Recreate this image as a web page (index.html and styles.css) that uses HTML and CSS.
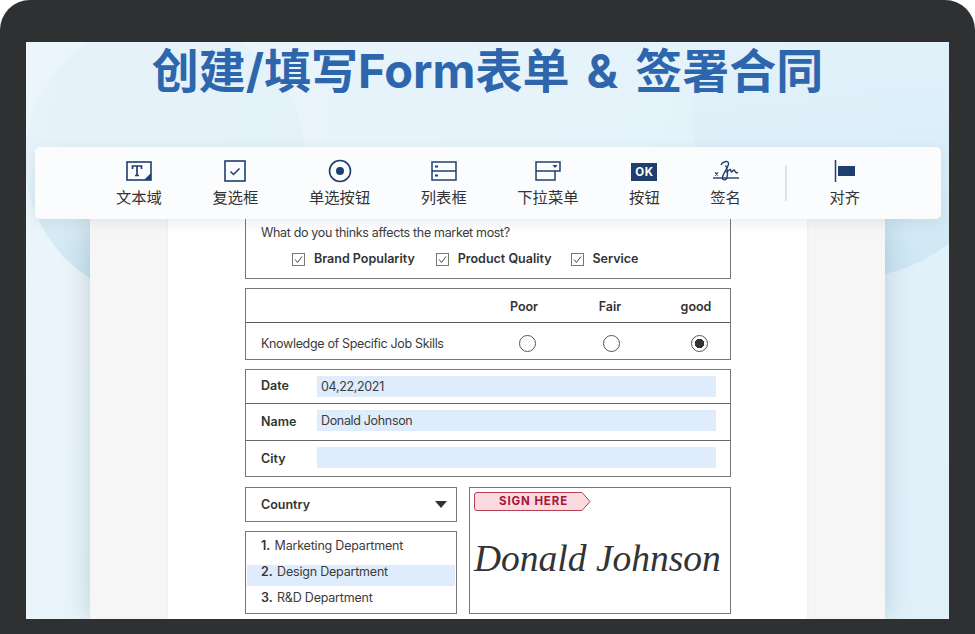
FILE: index.html
```html
<!DOCTYPE html>
<html lang="zh">
<head>
<meta charset="utf-8">
<title>创建/填写Form表单 & 签署合同</title>
<link rel="stylesheet" href="styles.css">
</head>
<body>
<div class="device">
  <main class="screen">
    <div class="blob blob-left"></div>
    <div class="blob blob-right"></div>
    <h1 class="title">创建/填写Form表单 &amp; 签署合同</h1>
    <nav class="toolbar">
      <div class="tool">
        <svg class="ico" width="26" height="22" viewBox="0 0 26 22"><rect x="1" y="2" width="24" height="18" fill="none" stroke="#1f3f6e" stroke-width="1.6"/><path d="M25 13v7h-7z" fill="#1f3f6e"/><path d="M6.500 9V6h9v3M11 6v9.500M9 15.500h4" fill="none" stroke="#1f3f6e" stroke-width="1.7"/></svg>
        <span>文本域</span>
      </div>
      <div class="tool">
        <svg class="ico" width="22" height="22" viewBox="0 0 22 22"><rect x="1" y="1" width="20" height="20" fill="none" stroke="#1f3f6e" stroke-width="1.6"/><path d="M6.500 11.500l3 3 6-6" fill="none" stroke="#1f3f6e" stroke-width="1.500"/></svg>
        <span>复选框</span>
      </div>
      <div class="tool">
        <svg class="ico" width="24" height="24" viewBox="0 0 24 24"><circle cx="12" cy="12" r="10.500" fill="none" stroke="#1f3f6e" stroke-width="1.6"/><circle cx="12" cy="12" r="4" fill="#1f3f6e"/></svg>
        <span>单选按钮</span>
      </div>
      <div class="tool">
        <svg class="ico" width="26" height="22" viewBox="0 0 26 22"><rect x="1" y="2" width="24" height="18" fill="none" stroke="#1f3f6e" stroke-width="1.500"/><path d="M1 11h24" stroke="#1f3f6e" stroke-width="1.500"/><path d="M4 5.500h3v2H4zM4 14.500h3v2H4z" fill="#1f3f6e"/></svg>
        <span>列表框</span>
      </div>
      <div class="tool">
        <svg class="ico" width="26" height="22" viewBox="0 0 26 22"><path d="M1 2h24v9h-5v9H1zM1 11h19" fill="none" stroke="#1f3f6e" stroke-width="1.500"/><path d="M17.500 5h5l-2.500 3z" fill="#1f3f6e"/></svg>
        <span>下拉菜单</span>
      </div>
      <div class="tool">
        <div class="ok">OK</div>
        <span>按钮</span>
      </div>
      <div class="tool">
        <svg class="ico" width="26" height="22" viewBox="0 0 26 22"><path d="M0 18h26" stroke="#1f3f6e" stroke-width="1.400"/><path d="M2 12.500l3 3M5 12.500l-3 3" stroke="#1f3f6e" stroke-width="1.100"/><path d="M8 5C9 2 15 0 15.500 3 16 7 10.500 12 9.500 17c-.6 3.500 3.500 4 4.500.5 1-4 .5-10-1.500-12M13 12c2-.5 3.500-3 4.500-2.500.8.500 0 2.500 1 2.500s1.500-2 2.500-2 1 2 2 2.500 1.500 0 2 0" fill="none" stroke="#1f3f6e" stroke-width="1.400"/></svg>
        <span>签名</span>
      </div>
      <div class="divider"></div>
      <div class="tool">
        <svg class="ico" width="22" height="22" viewBox="0 0 22 22"><path d="M1.500 0v22" stroke="#1f3f6e" stroke-width="1.500"/><rect x="4" y="6" width="17" height="10" fill="#1f3f6e"/></svg>
        <span>对齐</span>
      </div>
    </nav>

    <section class="page">
      <div class="sheet">
        <div class="box question">
          <p class="ask">What do you thinks affects the market most?</p>
          <div class="checks">
            <label class="check"><svg width="13" height="13" viewBox="0 0 13 13"><rect x=".5" y=".5" width="12" height="12" fill="#fff" stroke="#777"/><path d="M3 6.500l2.500 3 4.500-6" fill="none" stroke="#444"/></svg>Brand Popularity</label>
            <label class="check"><svg width="13" height="13" viewBox="0 0 13 13"><rect x=".5" y=".5" width="12" height="12" fill="#fff" stroke="#777"/><path d="M3 6.500l2.500 3 4.500-6" fill="none" stroke="#444"/></svg>Product Quality</label>
            <label class="check"><svg width="13" height="13" viewBox="0 0 13 13"><rect x=".5" y=".5" width="12" height="12" fill="#fff" stroke="#777"/><path d="M3 6.500l2.500 3 4.500-6" fill="none" stroke="#444"/></svg>Service</label>
          </div>
        </div>

        <div class="box rating">
          <div class="rate-head"><span></span><b>Poor</b><b>Fair</b><b>good</b></div>
          <div class="rate-row">
            <span>Knowledge of Specific Job Skills</span>
            <i class="radio"></i><i class="radio"></i><i class="radio on"></i>
          </div>
        </div>

        <div class="box fields">
          <div class="field"><b>Date</b><div class="input">04,22,2021</div></div>
          <div class="field"><b>Name</b><div class="input">Donald Johnson</div></div>
          <div class="field"><b>City</b><div class="input"></div></div>
        </div>

        <div class="bottom">
          <div class="col">
            <div class="box select"><b>Country</b><i class="caret"></i></div>
            <div class="box list">
              <div class="opt"><b>1.</b> Marketing Department</div>
              <div class="opt sel"><b>2.</b> Design Department</div>
              <div class="opt"><b>3.</b> R&amp;D Department</div>
            </div>
          </div>
          <div class="box sign">
            <div class="badge">
              <svg class="badge-bg" width="117" height="19" viewBox="0 0 117 19"><path d="M3 .5h105l8 9-8 9H3a2.500 2.500 0 0 1-2.500-2.500V3A2.500 2.500 0 0 1 3 .5z" fill="#fbdbe0" stroke="#b5404f"/></svg>
              <span>SIGN HERE</span>
            </div>
            <div class="signature">Donald Johnson</div>
          </div>
        </div>
      </div>
    </section>
  </main>
</div>
</body>
</html>
```
FILE: styles.css
```css
* { box-sizing: border-box; }
html, body { margin: 0; height: 100%; background: #fff; overflow: hidden; }
body { font-family: Inter, "Noto Sans CJK SC", sans-serif; color: #333; }

.device {
  width: 975px;
  height: 634px;
  background: #2f3032;
  border-radius: 30px 30px 0 0;
  padding: 42px 26px 15px;
}
.screen {
  position: relative;
  isolation: isolate;
  height: 577px;
  display: flex;
  flex-direction: column;
  overflow: hidden;
  background: linear-gradient(100deg, #ebf5fb 0%, #e6f3fa 50%, #e0f1fa 100%);
}
.blob {
  position: absolute;
  z-index: -1;
  border-radius: 50%;
}
.blob-left {
  left: -1px;
  top: -22px;
  width: 280px;
  height: 280px;
  background: linear-gradient(180deg, rgba(190,220,235,.10) 0%, rgba(190,220,235,.10) 52%, rgba(165,212,232,.5) 100%);
}
.blob-right {
  left: 666px;
  top: -80px;
  width: 316px;
  height: 316px;
  background: linear-gradient(180deg, rgba(190,222,238,0) 25%, rgba(190,222,238,.2) 65%, rgba(180,218,236,.45) 100%);
}
.title {
  flex: none;
  margin: 0;
  height: 105px;
  font: 700 47px/58px Inter, "Noto Sans CJK SC", sans-serif;
  word-spacing: 6px;
  color: #2e66ae;
  text-align: center;
  white-space: pre;
}
.toolbar {
  position: relative;
  z-index: 2;
  flex: none;
  margin: 0 8px 0 9px;
  height: 72px;
  padding: 0 0 0 81px;
  display: flex;
  align-items: flex-start;
  gap: 50.6px;
  background: #fbfcfe;
  border-radius: 5px;
  box-shadow: 0 4px 14px rgba(60,80,100,.10);
}
.tool {
  height: 72px;
  padding-top: 12px;
  display: flex;
  flex-direction: column;
  align-items: center;
  font-size: 15.3px;
  line-height: 20px;
  color: #333;
}
.ico { flex: none; height: 24px; margin-bottom: 5px; }
.ok {
  flex: none;
  width: 26px;
  height: 18px;
  margin: 4px 0 7px;
  background: #1f3f6e;
  color: #fff;
  font: 700 11.500px/18px Inter, sans-serif;
  text-align: center;
  letter-spacing: .5px;
}
.divider {
  flex: none;
  width: 2px;
  height: 36px;
  margin: 18px -8px 0 -6.6px;
  background: #e0e3e6;
}

.page {
  flex: 1;
  min-height: 0;
  margin: 0 64px;
  padding: 0 78px;
  background: #f6f6f6;
  box-shadow: 0 0 26px rgba(60,90,115,.25);
}
.sheet {
  height: 100%;
  padding: 0 76px 0 77px;
  background: #fff;
  box-shadow: 0 0 3px rgba(0,0,0,.07);
  font-size: 12.5px;
  letter-spacing: -.33px;
  color: #3c3c3c;
}
.sheet b, .check { letter-spacing: 0; color: #333; }
.box { border: 1px solid #777; }
.question {
  border-top: 0;
  height: 60px;
  margin-bottom: 9px;
  padding: 6px 15px 0;
}
.ask { margin: 0; line-height: 16px; }
.checks {
  display: flex;
  gap: 21px;
  margin-top: 10px;
  padding-left: 31px;
  line-height: 16px;
}
.check { display: flex; align-items: center; gap: 9px; font-weight: 600; }
.check:last-child { margin-left: -1px; gap: 8px; }
.rating { height: 72px; margin-bottom: 9px; }
.rate-head, .rate-row { display: grid; align-items: center; justify-items: center; }
.rate-head { height: 34px; padding-top: 1px; grid-template-columns: 1fr 68px 104px 68px; border-bottom: 1px solid #555; }
.rate-head b { font-weight: 600; }
.rate-row { height: 36px; padding-top: 4px; grid-template-columns: 1fr 54px 114px 62px; }
.rate-row span { justify-self: start; padding-left: 15px; }
.radio { width: 17px; height: 17px; border: 1px solid #555; border-radius: 50%; background: #fff; display: block; }
.radio.on { background: radial-gradient(circle, #333 0 4.500px, #fff 5px); }
.fields { height: 108px; margin-bottom: 10px; }
.field {
  height: 36px;
  display: flex;
  align-items: flex-start;
  padding: 6px 14px 0 15px;
  border-bottom: 1px solid #666;
}
.field:first-child { height: 34px; }
.field:nth-child(2) { height: 37px; }
.field:last-child { height: 35px; border-bottom: 0; }
.field b { width: 56px; font-weight: 600; line-height: 20px; }
.field:nth-child(2) b { line-height: 24px; }
.field:last-child b { line-height: 24px; }
.input {
  flex: 1;
  height: 21px;
  padding-left: 4px;
  line-height: 21px;
  background: #deecfb;
}
.bottom { display: flex; gap: 12px; }
.col { width: 212px; flex: none; }
.select {
  height: 35px;
  margin-bottom: 9px;
  padding: 0 9px 1px 15px;
  display: flex;
  align-items: center;
  justify-content: space-between;
}
.select b { font-weight: 600; }
.caret { width: 0; height: 0; border: 6px solid transparent; border-top: 7px solid #333; border-bottom: 0; }
.list { height: 83px; padding: 1px; letter-spacing: -.2px; }
.opt { height: 27px; padding: 0 0 0 14px; line-height: 25px; }
.opt b { font-weight: 600; margin-right: 1px; }
.opt.sel { height: 21px; margin-top: 5px; line-height: 14px; background: #deecfb; }
.opt:last-child { height: 25px; line-height: 24px; }
.sign { position: relative; flex: 1; min-width: 0; height: 127px; overflow: hidden; }
.badge {
  position: relative;
  width: 117px;
  height: 19px;
  margin: 4px 0 0 4px;
  display: flex;
  align-items: center;
  padding-left: 25px;
  color: #a5153a;
  font: 700 11.500px/19px Inter, sans-serif;
  letter-spacing: .9px;
}
.badge-bg { position: absolute; left: 0; top: 0; }
.badge span { position: relative; }
.signature {
  margin: 20px 0 0 4px;
  font: italic 400 37.500px/56px "Liberation Serif", serif;
  letter-spacing: 0;
  color: #333;
  white-space: nowrap;
}
```
